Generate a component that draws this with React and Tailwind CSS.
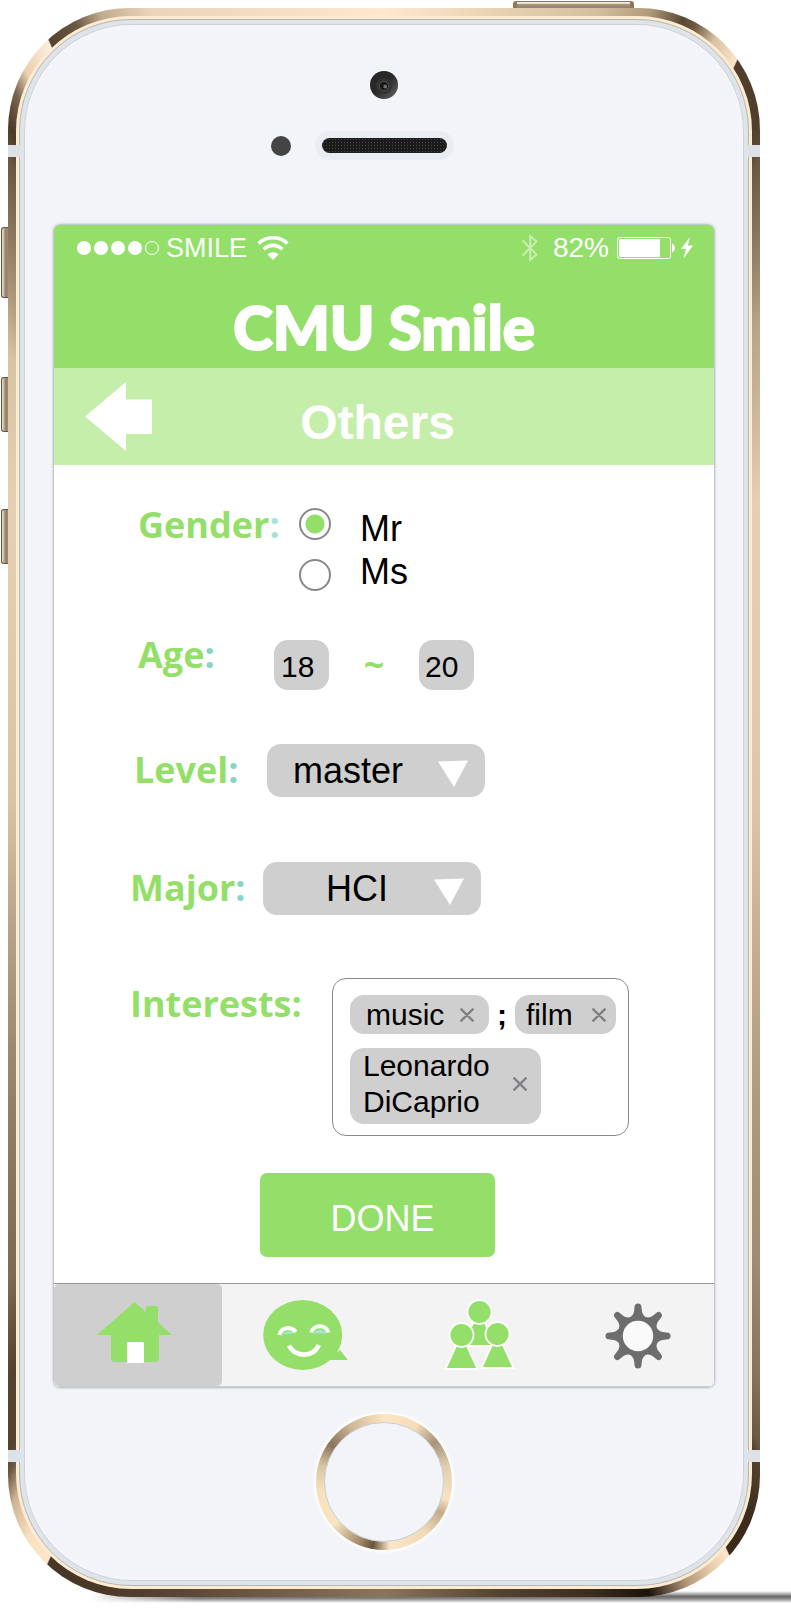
import React, { useState } from "react";

const FRAME =
  "bg-[conic-gradient(#fde9cc_0deg,#d4bf9f_15deg,#b09a7a_18.6deg,#5a4836_20.9deg,#6b5640_21.8deg,#d8c0a0_23.4deg,#fbe5cc_25.4deg,#503e2a_25.5deg,#4f3e2c_28.7deg,#5c4a38_29.7deg,#6b5843_30.2deg,#8a7760_33.3deg,#b8a48a_38deg,#e5d0b4_51deg,#dcc7aa_90deg,#a08c74_141deg,#88745c_147deg,#6b5843_149.7deg,#55432f_150.3deg,#3a2b1c_153deg,#3a2b1c_155.3deg,#fde6cc_155.4deg,#e9d0b0_156.7deg,#b79c7c_158.7deg,#1c130a_161.5deg,#3a2b1c_165deg,#54432f_171.7deg,#8a755c_180deg,#54402f_196.5deg,#4a3827_200deg,#483726_203.8deg,#fde6cc_203.9deg,#f8e0c0_205.8deg,#cdb493_207.9deg,#6b5742_209.2deg,#55432f_210deg,#544230_213deg,#7d6a52_218deg,#d8c3a5_270deg,#e5d0b4_308.8deg,#d8c3a5_320deg,#ad987c_323.7deg,#6b5843_329.7deg,#4a3a28_331deg,#7a6650_332.6deg,#e8d0b0_333.9deg,#fdeedd_336.2deg,#54422f_336.3deg,#6a5843_338.4deg,#c0aa8c_340.2deg,#e8d5ba_343.5deg,#fde9cc_360deg)]";

const RING =
  "bg-[conic-gradient(#fde6c4_0deg,#f5ddba_30deg,#a8927a_52deg,#e0cdaf_75deg,#f8e4c4_105deg,#c4ab8a_118deg,#f0d9b6_140deg,#fbe6c6_175deg,#6b543c_190deg,#a88e6e_203deg,#fae4c2_230deg,#f7e0bc_262deg,#d8c4a4_285deg,#8a745c_305deg,#d0b898_330deg,#fde6c4_360deg)]";

const SideButton = ({ className }) => (
  <span
    className={`absolute left-[1px] w-[8px] rounded-l-[3px] border border-r-0 border-[#66563f] bg-[linear-gradient(90deg,#f0e4cf,#8f7d63_55%,#a9967a)] ${className}`}
  />
);

const Antenna = ({ className }) => (
  <span className={`absolute h-3 w-3 bg-[#dce1e7] ${className}`} />
);

function StatusBar() {
  return (
    <div className="flex h-[46px] items-center pr-[21px] pl-[23px] text-white">
      <div className="flex gap-[3px]" aria-hidden="true">
        <span className="size-[14px] rounded-full bg-white" />
        <span className="size-[14px] rounded-full bg-white" />
        <span className="size-[14px] rounded-full bg-white" />
        <span className="size-[14px] rounded-full bg-white" />
        <span className="size-[14px] rounded-full border border-white" />
      </div>
      <span className="ml-[7px] text-[27px] leading-8">SMILE</span>
      <svg className="ml-[10px] h-6 w-8" viewBox="0 0 32 24" aria-hidden="true">
        <g fill="none" stroke="#fff" strokeWidth="3.6">
          <path d="M1.600 7.600C9.500 -.3 22.500 -.3 30.400 7.600" />
          <path d="M6.700 13.300C12 8 20 8 25.300 13.300" />
        </g>
        <path d="M10.600 18.400C13.500 15.500 18.500 15.500 21.400 18.400L16 24Z" fill="#fff" />
      </svg>
      <svg className="ml-auto h-7 w-[18px] opacity-50" viewBox="0 0 18 28" aria-hidden="true">
        <path d="M1.500 6.500L15.500 20.500L9.200 26V2L15.500 7.500L1.500 21.500" fill="none" stroke="#fff" strokeWidth="1.900" />
      </svg>
      <span className="ml-[14px] text-[28px] leading-8">82%</span>
      <svg className="ml-2 h-6 w-[58px]" viewBox="0 0 58 24" aria-hidden="true">
        <rect x=".5" y="1.500" width="53" height="21" rx="2" fill="none" stroke="#fff" />
        <rect x="2" y="3" width="41" height="18" rx="1" fill="#fff" />
        <path d="M55 7.500C58.700 8.500 58.700 15.500 55 16.500Z" fill="#fff" />
      </svg>
      <svg className="ml-[6px] h-[22px] w-3" viewBox="0 0 12 22" aria-hidden="true">
        <path d="M9 0L0 12H5L2.500 21.500L12 8.500H6.800Z" fill="#fff" />
      </svg>
    </div>
  );
}

const labelText =
  "shrink-0 font-['Open_Sans','Noto_Sans',sans-serif] text-[36px] font-bold leading-[51px] text-[#93df69]";

function Dropdown({ id, value, options, className }) {
  const [current, setCurrent] = useState(value);
  return (
    <div className="relative">
      <select
        id={id}
        value={current}
        onChange={(e) => setCurrent(e.target.value)}
        className={`h-[53px] w-[218px] appearance-none rounded-[14px] bg-[#cfcfcf] text-[36px] text-black ${className}`}
      >
        {options.map((o) => (
          <option key={o}>{o}</option>
        ))}
      </select>
      <svg className="pointer-events-none absolute top-4 right-[17px] h-7 w-[30px]" viewBox="0 0 30 28" aria-hidden="true">
        <path d="M0 1.500L30 .5L16 27Z" fill="#fff" />
      </svg>
    </div>
  );
}

function Chip({ children, name, className }) {
  return (
    <span className={`flex items-center justify-between rounded-[14px] bg-[#cfcfcf] ${className}`}>
      <span>{children}</span>
      <button type="button" aria-label={`Remove ${name}`}>
        <svg className="size-[14px]" viewBox="0 0 14 14">
          <path d="M1.300 1.300L12.700 12.700M12.700 1.300L1.300 12.700" stroke="#808085" strokeWidth="2.400" strokeLinecap="round" />
        </svg>
      </button>
    </span>
  );
}

const radio =
  "size-8 appearance-none rounded-full border-2 border-[#888] bg-white checked:bg-[radial-gradient(circle,#93df69_9px,#fff_10px)]";

function ProfileForm() {
  return (
    <form className="flex flex-col pt-[34px] pb-[26px]" onSubmit={(e) => e.preventDefault()}>
      <div role="radiogroup" aria-labelledby="gender" className="flex items-start pl-[84px]">
        <span id="gender" className={`w-[161px] ${labelText}`}>
          Gender<span className="text-[#a3e6d8]">:</span>
        </span>
        <div className="flex flex-col gap-[19px] pt-[9px]">
          <input id="mr" type="radio" name="gender" defaultChecked className={radio} />
          <input id="ms" type="radio" name="gender" className={radio} />
        </div>
        <div className="ml-[29px] flex flex-col pt-2 text-[36px] leading-[43px]">
          <label htmlFor="mr">Mr</label>
          <label htmlFor="ms">Ms</label>
        </div>
      </div>

      <div className="mt-9 flex items-start pl-[84px]">
        <label htmlFor="age-from" className={`w-[136px] ${labelText}`}>
          Age<span className="text-[#87d5c4]">:</span>
        </label>
        <div className="flex items-center pt-[11px]">
          <input id="age-from" defaultValue="18" className="h-[50px] w-[55px] rounded-[14px] bg-[#cfcfcf] pt-1 pl-[7px] text-[30px]" />
          <span className="w-[90px] text-center font-['Open_Sans',sans-serif] text-[36px] leading-[48px] font-bold text-[#93df69]">~</span>
          <input aria-label="Maximum age" defaultValue="20" className="h-[50px] w-[55px] rounded-[14px] bg-[#cfcfcf] pt-1 pl-[6px] text-[30px]" />
        </div>
      </div>

      <div className="mt-[54px] flex items-start pl-[80px]">
        <label htmlFor="level" className={`w-[133px] ${labelText}`}>
          Level<span className="text-[#87d5c4]">:</span>
        </label>
        <Dropdown id="level" value="master" options={["bachelor", "master", "doctor"]} className="pl-[26px]" />
      </div>

      <div className="mt-[65px] flex items-start pl-[76px]">
        <label htmlFor="major" className={`w-[133px] ${labelText}`}>
          Major<span className="text-[#87d5c4]">:</span>
        </label>
        <Dropdown id="major" value="HCI" options={["HCI", "CS", "Design"]} className="pl-[63px]" />
      </div>

      <div className="mt-[63px] flex items-start pl-[76px]">
        <span id="interests" className={`w-[202px] ${labelText}`}>Interests:</span>
        <div
          role="group"
          aria-labelledby="interests"
          className="flex w-[297px] flex-col gap-[14px] rounded-[14px] border border-[#888] pt-4 pr-3 pb-[11px] pl-[17px] text-[30px] leading-[36px]"
        >
          <div className="flex items-center justify-between">
            <Chip name="music" className="h-[39px] w-[139px] pr-[15px] pl-4">music</Chip>
            <span className="font-bold">;</span>
            <Chip name="film" className="h-[39px] w-[101px] pr-[10px] pl-[11px]">film</Chip>
          </div>
          <Chip name="Leonardo DiCaprio" className="h-[76px] w-[191px] pr-[14px] pb-1 pl-[13px]">
            Leonardo
            <br />
            DiCaprio
          </Chip>
        </div>
      </div>

      <button
        type="submit"
        className="mt-[37px] ml-[206px] h-[84px] w-[235px] rounded-[7px] bg-[#93df69] pt-2 pl-[10px] text-[36px] text-white"
      >
        DONE
      </button>
    </form>
  );
}

function TabBar() {
  return (
    <nav className="grid h-[104px] grid-cols-[168fr_168fr_178fr_146fr] border-t border-b border-t-[#999] border-b-[#c9ccd0] bg-[#f3f3f3]">
      <a href="#home" aria-label="Home" className="flex items-center justify-center rounded-[5px] bg-[#cfcfcf] pr-2 pb-[6px]">
        <svg className="h-[61px] w-[75px]" viewBox="0 0 75 61">
          <path
            d="M0 33L37.500 0L49 10V6Q49 4 51 4H59Q61 4 61 6V20.500L75 33H62V56Q62 60 58 60H18Q14 60 14 56V33Z"
            fill="#93df69"
          />
          <rect x="30" y="40" width="17" height="21" rx="1.500" fill="#fff" />
        </svg>
      </a>
      <a href="#chat" aria-label="Chat" className="flex items-center justify-center">
        <svg className="h-[70px] w-[86px]" viewBox="0 0 86 70">
          <ellipse cx="39.700" cy="35" rx="39.500" ry="35" fill="#93df69" />
          <path d="M77 50L85 60H62Z" fill="#93df69" />
          <path d="M19 34.500Q25 28 31 33.500ZM50.500 33.500Q57 26 63.500 33.500Z" fill="#a3e6d8" />
          <g fill="none" stroke="#fff">
            <path d="M16.400 35C18 27 28 26 32.700 32" strokeWidth="4" />
            <path d="M48.500 32.500C50 24.500 63 24 65.500 32.500" strokeWidth="4" />
            <path d="M26 45.500C32 57.500 50 58 55.800 45" strokeWidth="4.600" />
          </g>
        </svg>
      </a>
      <a href="#friends" aria-label="Friends" className="flex items-center justify-center">
        <svg className="h-[72px] w-[71px]" viewBox="0 0 71 72" fill="#93df69" stroke="#fff" strokeWidth="1.800">
          <path d="M29 24H41L52 47H18Z" />
          <circle cx="35.500" cy="13" r="12" />
          <path d="M12 47H23L33.500 70H1.500Z" />
          <path d="M48 46H59L69.500 69H37.500Z" />
          <circle cx="17.500" cy="36" r="12" />
          <circle cx="53.500" cy="35" r="12" />
        </svg>
      </a>
      <a href="#settings" aria-label="Settings" className="flex items-center justify-center pt-[2px] pr-[6px]">
        <svg className="size-[66px]" viewBox="-33 -33 66 66">
          <g fill="#6d6d6d">
            {[0, 45, 90, 135, 180, 225, 270, 315].map((a) => (
              <path
                key={a}
                transform={`rotate(${a})`}
                d="M-9.500 -17C-6 -20 -4 -22 -3.800 -26L-3.300 -30Q-3 -32.500 0 -32.500T3.300 -30L3.800 -26C4 -22 6 -20 9.500 -17Z"
              />
            ))}
            <circle r="20.500" />
          </g>
          <circle r="15.200" fill="#fafafa" />
        </svg>
      </a>
    </nav>
  );
}

function Screen() {
  return (
    <main className="mt-[65px] overflow-hidden rounded-[6px] bg-white shadow-[0_0_3px_rgba(60,65,75,0.7)]">
      <header>
        <div className="h-[143px] bg-[#93df69]">
          <StatusBar />
          <h1 className="pt-[18px] text-center font-['Lato',sans-serif] text-[60px] leading-[76px] font-black text-white [-webkit-text-stroke:2px_white]">
            CMU Smile
          </h1>
        </div>
        <div className="flex h-[97px] items-center bg-[#c5eeab] pr-[111px] pl-[31px]">
          <button type="button" aria-label="Back">
            <svg className="h-[69px] w-[67px]" viewBox="0 0 67 69">
              <path d="M0 34.500L41 0V17.500H67V52H41V69Z" fill="#fff" />
            </svg>
          </button>
          <h2 className="flex-1 pt-3 text-center text-[48px] leading-[56px] font-bold text-white">Others</h2>
        </div>
      </header>
      <ProfileForm />
      <TabBar />
    </main>
  );
}

export default function App() {
  return (
    <div className="relative bg-white pt-2 pr-[31px] pb-[11px] pl-2 font-['Liberation_Sans',sans-serif] text-black">
      <span className="absolute right-0 bottom-[5px] left-[90px] h-[12px] bg-[linear-gradient(#fff0,#6a6a6a_45%,#888_65%,#fff0)] [mask-image:linear-gradient(90deg,transparent,black_15%)]" />
      <span className="absolute top-[1px] right-[157px] h-2 w-[121px] rounded-t-[3px] border-x-4 border-t border-[#8a775c] bg-[linear-gradient(#eee8e0_20%,#a8957a_30%,#8f7c62)]" />
      <SideButton className="top-[227px] h-[71px]" />
      <SideButton className="top-[377px] h-[55px]" />
      <SideButton className="top-[509px] h-[55px]" />

      <div className={`relative rounded-[122px] p-2 ${FRAME}`}>
        <div className="rounded-[115px] bg-[#fdebd0] p-[3px]">
          <div className="rounded-[112px] border border-[#b4b6b9] bg-[#dfe4e9] p-[5px]">
            <div className="flex flex-col rounded-[107px] bg-[#f2f4f7] px-[29px] pt-[46px] pb-[30px] shadow-[0_0_0_1px_#cdd3d9,inset_0_0_12px_#f5f7fc]">
              <svg className="mx-auto size-7" viewBox="0 0 28 28" aria-hidden="true">
                <defs>
                  <linearGradient id="lens" x1="0" y1="0" x2="1" y2="1">
                    <stop offset="0" stopColor="#222" />
                    <stop offset=".5" stopColor="#2b2b2b" />
                    <stop offset="1" stopColor="#666" />
                  </linearGradient>
                </defs>
                <circle cx="14" cy="14" r="14" fill="url(#lens)" />
                <circle cx="14" cy="15" r="8" fill="#333" />
                <circle cx="14" cy="15" r="4.500" fill="#111" stroke="#555" />
                <circle cx="15" cy="15.500" r="2" fill="#777" />
                <circle cx="13" cy="14" r="1.500" fill="#222" />
              </svg>
              <div className="mt-8 flex items-center justify-center gap-6">
                <span className="size-5 rounded-full bg-[#444]" />
                <span className="rounded-full bg-[#e9edf2] p-[7px]">
                  <span className="block h-[15px] w-[125px] rounded-full bg-[#1b1b1b] bg-[radial-gradient(#4a4a4a_1px,#0000_1px)] bg-[size:3px_3px]" />
                </span>
                <span className="w-5" />
              </div>
              <Screen />
              <button
                type="button"
                aria-label="Home button"
                className={`mx-auto mt-[27px] size-[136px] rounded-full p-2 shadow-[0_0_3px_2px_#fff] ${RING}`}
              >
                <span className="block size-full rounded-full border border-[#c9ced6] bg-[#f2f4f7]" />
              </button>
            </div>
          </div>
        </div>
        <Antenna className="top-[137px] left-0" />
        <Antenna className="top-[137px] right-0" />
        <Antenna className="bottom-[135px] left-0" />
        <Antenna className="right-0 bottom-[135px]" />
      </div>
    </div>
  );
}
